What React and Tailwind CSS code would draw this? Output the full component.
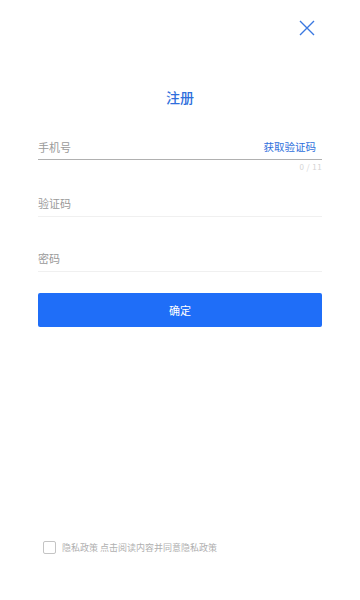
import { useState } from "react";

const font = { fontFamily: '"Noto Sans CJK SC", "Noto Sans", sans-serif' };

export default function App() {
  const [phone, setPhone] = useState("");
  const [agree, setAgree] = useState(false);

  return (
    <div className="relative flex h-[600px] w-[360px] flex-col bg-white" style={font}>
      <div className="flex justify-end pr-[45px] pt-[20px]">
        <button type="button" aria-label="关闭" className="h-[16px] w-[16px] text-[#3a78e0]">
          <svg viewBox="0 0 16 16" className="h-[16px] w-[16px]" fill="none" stroke="currentColor" strokeWidth="1.4">
            <path d="M1 1L15 15M15 1L1 15" />
          </svg>
        </button>
      </div>

      <h1 className="mt-[51px] text-center text-[14px] font-medium leading-[20px] text-[#2f6fdc]">注册</h1>

      <div className="mt-[30px] px-[38px]">
        <div className="flex items-center border-b-[1.5px] border-[#b0b0b0] pb-[2px]">
          <input
            value={phone}
            onChange={(e) => setPhone(e.target.value.slice(0, 11))}
            placeholder="手机号"
            className="h-[20px] flex-1 bg-transparent text-[11px] text-[#333] outline-none placeholder:text-[#9a9a9a]"
          />
          <span className="mr-[6px] text-[10.5px] leading-[16px] text-[#2f6fdc]">获取验证码</span>
        </div>
        <div className="mt-[2px] text-right text-[8px] leading-[10px] tracking-wider text-[#d4d4d4]">{phone.length} / 11</div>

        <div className="mt-[21px] flex items-end border-b border-[#f0f0f0] pb-[3px]">
          <input
            placeholder="验证码"
            className="h-[20px] flex-1 bg-transparent text-[11px] text-[#333] outline-none placeholder:text-[#9a9a9a]"
          />
        </div>

        <div className="mt-[31px] flex items-end border-b border-[#f0f0f0] pb-[3px]">
          <input
            type="password"
            placeholder="密码"
            className="h-[20px] flex-1 bg-transparent text-[11px] text-[#333] outline-none placeholder:text-[#9a9a9a]"
          />
        </div>

        <button
          type="button"
          className="mt-[21px] flex h-[34px] w-full items-center justify-center rounded-[2px] bg-[#1f6ef8] text-[11px] text-white"
        >
          确定
        </button>
      </div>

      <div className="mt-auto mb-[46px] flex items-center gap-[6px] pl-[43px]">
        <button
          type="button"
          onClick={() => setAgree(!agree)}
          aria-label="同意隐私政策"
          className={`h-[13px] w-[13px] rounded-[2px] border ${agree ? "border-[#1f6ef8] bg-[#1f6ef8]" : "border-[#c4c4c4] bg-white"}`}
        />
        <span className="text-[9px] leading-[12px] text-[#b0b0b0]">隐私政策 点击阅读内容并同意隐私政策</span>
      </div>
    </div>
  );
}
